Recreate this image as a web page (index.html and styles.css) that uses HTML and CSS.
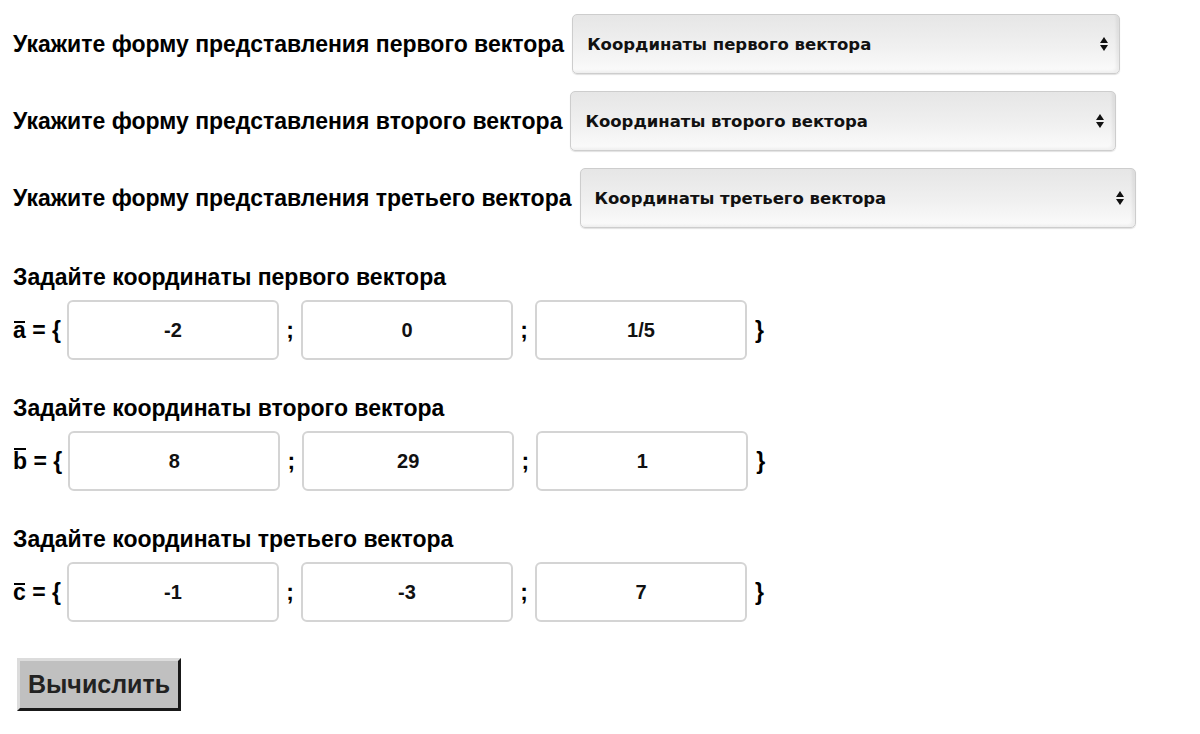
FILE: index.html
```
<!DOCTYPE html>
<html lang="ru">
<head>
<meta charset="utf-8">
<title>Векторы</title>
<link rel="stylesheet" href="styles.css">
</head>
<body>
<form class="calc">
  <div class="form-row">
    <label class="lead">Укажите форму представления первого вектора</label>
    <span class="select-wrap w1"><select class="sel"><option>Координаты первого вектора</option></select></span>
  </div>
  <div class="form-row">
    <label class="lead">Укажите форму представления второго вектора</label>
    <span class="select-wrap w2"><select class="sel"><option>Координаты второго вектора</option></select></span>
  </div>
  <div class="form-row">
    <label class="lead">Укажите форму представления третьего вектора</label>
    <span class="select-wrap w3"><select class="sel"><option>Координаты третьего вектора</option></select></span>
  </div>

  <div class="vec first">
    <div class="vec-title">Задайте координаты первого вектора</div>
    <div class="coords">
      <span class="vname"><span class="ov">a</span> = {</span>
      <input class="cell" value="-2">
      <span class="sep">;</span>
      <input class="cell" value="0">
      <span class="sep">;</span>
      <input class="cell" value="1/5">
      <span class="close">}</span>
    </div>
  </div>

  <div class="vec">
    <div class="vec-title">Задайте координаты второго вектора</div>
    <div class="coords">
      <span class="vname"><span class="ov ov-tall">b</span> = {</span>
      <input class="cell" value="8">
      <span class="sep">;</span>
      <input class="cell" value="29">
      <span class="sep">;</span>
      <input class="cell" value="1">
      <span class="close">}</span>
    </div>
  </div>

  <div class="vec">
    <div class="vec-title">Задайте координаты третьего вектора</div>
    <div class="coords">
      <span class="vname"><span class="ov">c</span> = {</span>
      <input class="cell" value="-1">
      <span class="sep">;</span>
      <input class="cell" value="-3">
      <span class="sep">;</span>
      <input class="cell" value="7">
      <span class="close">}</span>
    </div>
  </div>

  <div class="actions">
    <button type="button" class="btn">Вычислить</button>
  </div>
</form>
</body>
</html>
```
FILE: styles.css
```
html, body {
  margin: 0;
  padding: 0;
  background: #fff;
}
body {
  font-family: "Liberation Sans", Arial, Helvetica, sans-serif;
  color: #000;
}
.calc {
  padding: 14px 0 0 13px;
}
.form-row {
  display: flex;
  align-items: center;
  height: 60px;
  margin-bottom: 17px;
}
.lead {
  font-weight: bold;
  font-size: 23px;
  white-space: nowrap;
}
.select-wrap {
  position: relative;
  display: block;
  margin-left: 8px;
  height: 60px;
}
.w1 { width: 548px; }
.w2 { width: 546px; }
.w3 { width: 556px; }
.sel {
  -webkit-appearance: none;
  appearance: none;
  width: 100%;
  height: 60px;
  box-sizing: border-box;
  border: 1px solid #cdcdcd;
  border-radius: 5px;
  background: linear-gradient(#e6e6e6, #f0f0f0 55%, #fbfbfb);
  box-shadow: inset -3px -2px 3px rgba(0,0,0,0.05), 0 1px 1px rgba(0,0,0,0.12);
  padding: 0 0 0 14px;
  font-family: "DejaVu Sans", Verdana, sans-serif;
  font-weight: bold;
  font-size: 16.5px;
  color: #111;
}
.select-wrap::before,
.select-wrap::after {
  content: "";
  position: absolute;
  right: 12px;
  width: 0;
  height: 0;
  border-left: 4px solid transparent;
  border-right: 4px solid transparent;
}
.select-wrap::before {
  top: 23px;
  border-bottom: 6px solid #111;
}
.select-wrap::after {
  top: 31px;
  border-top: 6px solid #111;
}
.vec {
  margin-top: 35px;
}
.vec.first {
  margin-top: 36px;
}
.vec-title {
  font-weight: bold;
  font-size: 23px;
  line-height: 26px;
}
.coords {
  display: flex;
  align-items: center;
  margin-top: 10px;
  height: 60px;
}
.vname {
  font-weight: bold;
  font-size: 23px;
  margin-right: 6px;
  white-space: nowrap;
}
.ov {
  position: relative;
  display: inline-block;
}
.ov::before {
  content: "";
  position: absolute;
  left: 1px;
  right: 1px;
  top: 4px;
  height: 2px;
  background: currentColor;
}
.ov-tall::before {
  top: 0;
}
.cell {
  width: 212px;
  height: 60px;
  box-sizing: border-box;
  border: 2px solid #d4d4d4;
  border-radius: 6px;
  text-align: center;
  font-family: "Liberation Sans", Arial, sans-serif;
  font-weight: bold;
  font-size: 20px;
  color: #111;
  padding: 0;
  background: #fff;
}
.sep {
  font-weight: bold;
  font-size: 23px;
  width: 22px;
  text-align: center;
}
.close {
  font-weight: bold;
  font-size: 23px;
  margin-left: 8px;
}
.actions {
  margin-top: 36px;
  padding-left: 4px;
}
.btn {
  width: 164px;
  height: 53px;
  box-sizing: border-box;
  background: #c0c0c0;
  border: 3px outset #c0c0c0;
  border-color: #dcdcdc #6e6e6e #6e6e6e #dcdcdc;
  font-family: "Liberation Sans", Arial, sans-serif;
  font-weight: bold;
  font-size: 25px;
  color: #222;
  padding: 0;
}
```
